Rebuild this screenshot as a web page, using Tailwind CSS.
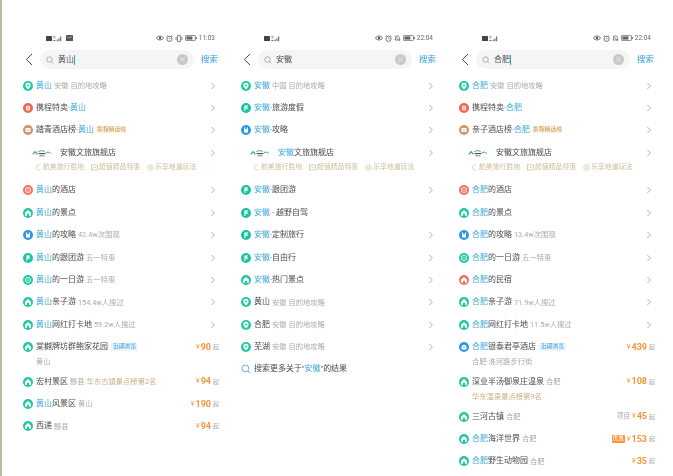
<!DOCTYPE html>
<html lang="en">

<head>
  <meta charset="UTF-8">
  <title>Search suggestions</title>
  <script src="https://cdn.jsdelivr.net/npm/@tailwindcss/browser@4"></script>
</head>

<body class="bg-white w-[673px] h-[476px] overflow-hidden font-['Roboto','Noto_Sans_CJK_SC',sans-serif] text-[8px] leading-none text-[#4a4a4a]">
  <!-- shared icons -->
  <svg class="hidden">
    <symbol id="pin" viewBox="0 0 10 10"><circle cx="5" cy="5" r="5" fill="#1fc9a3"/><path d="M5 1.8a2.6 2.6 0 0 1 2.6 2.6C7.6 6 5 8.4 5 8.4S2.4 6 2.4 4.4A2.6 2.6 0 0 1 5 1.8z" fill="#fff"/><circle cx="5" cy="4.4" r="1" fill="#1fc9a3"/></symbol>
    <symbol id="sale" viewBox="0 0 10 10"><circle cx="5" cy="5" r="5" fill="#f3674f"/><rect x="3" y="2.8" width="4" height="4.6" rx=".8" fill="#fff" opacity=".85"/><path d="M4.2 4.2h1.6M4.2 5.8h1.6" stroke="#f3674f" stroke-width=".6"/></symbol>
    <symbol id="rank" viewBox="0 0 10 10"><circle cx="5" cy="5" r="5" fill="#d0956a"/><rect x="2.4" y="3" width="5.2" height="4" rx="1" fill="#fff"/><path d="M3.4 5h3.2" stroke="#d0956a" stroke-width=".7"/></symbol>
    <symbol id="hotel" viewBox="0 0 10 10"><circle cx="5" cy="5" r="5" fill="#f46f60"/><rect x="2.6" y="2.8" width="4.8" height="4.4" rx="1" fill="none" stroke="#fff" stroke-width=".9"/><path d="M4 5h2" stroke="#fff" stroke-width=".8"/></symbol>
    <symbol id="scenic" viewBox="0 0 10 10"><circle cx="5" cy="5" r="5" fill="#21c8a0"/><path d="M5 2 8 4.7v3H6V5.8H4v1.9H2V4.7z" fill="#fff"/></symbol>
    <symbol id="inn" viewBox="0 0 10 10"><circle cx="5" cy="5" r="5" fill="#f46f60"/><path d="M5 2 8 4.7v3H6V5.8H4v1.9H2V4.7z" fill="#fff"/></symbol>
    <symbol id="guide" viewBox="0 0 10 10"><circle cx="5" cy="5" r="5" fill="#2d97e9"/><path d="M3 2.4h1.2v2l.9-.6.9.6v-2H7v5.2H3z" fill="#fff"/></symbol>
    <symbol id="flag" viewBox="0 0 10 10"><circle cx="5" cy="5" r="5" fill="#18c4a1"/><path d="M3.4 2.4h4L6 4.2l1.4 1.6h-3v2.2h-1z" fill="#fff"/></symbol>
    <symbol id="day" viewBox="0 0 10 10"><circle cx="5" cy="5" r="5" fill="#21c8a0"/><circle cx="5" cy="5" r="2.6" fill="none" stroke="#fff" stroke-width=".8"/><path d="M3.8 5h2.4" stroke="#fff" stroke-width=".7"/></symbol>
    <symbol id="stay" viewBox="0 0 10 10"><circle cx="5" cy="5" r="5" fill="#2d97e9"/><path d="M2.6 7.4V4L5 2.4 7.4 4v3.4z" fill="#fff"/><path d="M4 5h2" stroke="#2d97e9" stroke-width=".7"/></symbol>
    <symbol id="more" viewBox="0 0 8 8"><path d="M2.4 1 5.4 4 2.4 7" fill="none" stroke="#a8a8a8" stroke-width=".9"/></symbol>
    <symbol id="lens" viewBox="0 0 10 10"><circle cx="4.4" cy="4.4" r="3.4" fill="none" stroke="currentColor" stroke-width=".8"/><path d="m6.9 6.9 2.3 2.3" stroke="currentColor" stroke-width=".8"/></symbol>
    <symbol id="clear" viewBox="0 0 11 11"><circle cx="5.5" cy="5.5" r="5.5" fill="#c8c8c8"/><path d="m3.6 3.6 3.8 3.8m0-3.8L3.6 7.4" stroke="#f2f2f2" stroke-width=".9"/></symbol>
    <symbol id="back" viewBox="0 0 8 13"><path d="M7 1 1.4 6.5 7 12" fill="none" stroke="#444" stroke-width="1"/></symbol>
    <symbol id="logo" viewBox="0 0 20 8"><path d="M.8 5.4 3.2 2.6l2.2 2.8" fill="none" stroke="#35ad63" stroke-width="1.1"/><path d="M6.4 2.6c1.8-1.2 4.4-1.2 6.2 0" fill="none" stroke="#35ad63" stroke-width="1"/><path d="M14 3.6c1.6-.8 3-.6 4.8.8" fill="none" stroke="#35ad63" stroke-width="1"/><path d="M6.6 4.6h6.8" stroke="#444" stroke-width="1.1"/><path d="M7.6 6.8h2.2" stroke="#e0483e" stroke-width="1.1"/><path d="M10.2 6.8h2.2" stroke="#3a8fd8" stroke-width="1.1"/></symbol>
    <symbol id="eye" viewBox="0 0 8 6"><path d="M.4 3C2 .4 6 .4 7.6 3 6 5.6 2 5.6.4 3z" fill="none" stroke="#555" stroke-width=".8"/><circle cx="4" cy="3" r="1.2" fill="#555"/></symbol>
    <symbol id="alarm" viewBox="0 0 7 7"><circle cx="3.5" cy="3.8" r="2.6" fill="none" stroke="#555" stroke-width=".8"/><path d="M.6 1.4 1.8.4M6.4 1.4 5.2.4M3.5 2.6v1.3h1" fill="none" stroke="#555" stroke-width=".6"/></symbol>
    <symbol id="buzz" viewBox="0 0 8 7"><rect x="2.4" y=".6" width="3.2" height="5.8" rx=".5" fill="none" stroke="#555" stroke-width=".8"/><path d="M1 2v3M7 2v3" stroke="#555" stroke-width=".7"/></symbol>
    <symbol id="mute" viewBox="0 0 7 7"><path d="M3.5.8c-1.4 0-1.8 1-1.8 2.2L1 5h5l-.7-2C5.3 1.8 4.9.8 3.5.8z" fill="none" stroke="#555" stroke-width=".7"/><path d="m1 .8 5 5.6" stroke="#555" stroke-width=".6"/></symbol>
    <symbol id="batt" viewBox="0 0 12 6"><rect x=".4" y=".4" width="10" height="5.2" rx=".8" fill="none" stroke="#555" stroke-width=".7"/><rect x="1.4" y="1.4" width="6" height="3.2" fill="#666"/><rect x="10.8" y="2" width=".9" height="2" fill="#555"/></symbol>
    <symbol id="signal" viewBox="0 0 18 7"><rect x="0" y="1" width="6" height="5" rx=".5" fill="#444"/><path d="M7.4 1.4h2M7.4 3h2" stroke="#666" stroke-width=".7"/><rect x="7.4" y="5" width="2" height="1" fill="#666"/><rect x="10.6" y="4.6" width="1" height="1.6" fill="#555"/><rect x="12.4" y="3.4" width="1" height="2.8" fill="#555"/><rect x="14.2" y="1.4" width="1" height="4.8" fill="#555"/></symbol>
    <symbol id="mail" viewBox="0 0 7 6"><rect width="7" height="6" rx=".6" fill="#555"/><path d="m1 1.4 2.5 1.8L6 1.4" fill="none" stroke="#ddd" stroke-width=".6"/></symbol>
    <symbol id="tag1" viewBox="0 0 7 7"><path d="M5.6 1H2.4L1.4 3.5 2.4 6h3.2" fill="none" stroke="#d8ccb0" stroke-width=".7"/></symbol>
    <symbol id="tag2" viewBox="0 0 7 7"><rect x=".6" y="1" width="5.8" height="5" fill="none" stroke="#cdb98f" stroke-width=".7"/><path d="M2.4 3.5h2.2" stroke="#cdb98f" stroke-width=".7"/></symbol>
    <symbol id="tag3" viewBox="0 0 7 7"><circle cx="3.5" cy="3.5" r="3" fill="none" stroke="#d8ccb0" stroke-width=".7"/><circle cx="3.5" cy="3.5" r="1.2" fill="none" stroke="#cdb98f" stroke-width=".7"/></symbol>
  </svg>

  <div class="flex h-full blur-[0.3px]">
    <!-- Huangshan -->
    <div class="w-[218px] shrink-0 h-full border-l-[2px] border-[#b9b9a6]">
      <div class="flex items-center justify-between h-[14px] mt-[31px] pl-[44px] pr-[3px]">
        <div class="flex items-center gap-[2px]">
          <svg class="w-[18px] h-[7px]"><use href="#signal"/></svg>
          <svg class="w-[7px] h-[6px]"><use href="#mail"/></svg>
        </div>
        <div class="flex items-center gap-[2px] text-[6.5px] text-[#666]">
          <svg class="w-[8px] h-[6px]"><use href="#eye"/></svg>
          <svg class="w-[7px] h-[7px]"><use href="#alarm"/></svg>
          <svg class="w-[8px] h-[7px]"><use href="#buzz"/></svg>
          <svg class="w-[12px] h-[6px]"><use href="#batt"/></svg>
          <span>11:03</span>
        </div>
      </div>
      <div class="flex items-center h-[19px] mt-[5px] pl-[23px]">
        <svg class="w-[8px] h-[13px]"><use href="#back"/></svg>
        <div class="flex items-center w-[154px] h-[19px] ml-[7px] pl-[6px] pr-[6px] rounded-full bg-[#f5f5f5]">
          <svg class="w-[8px] h-[8px] text-[#888]"><use href="#lens"/></svg>
          <span class="ml-[4px]">黄山</span>
          <span class="w-px h-[10px] bg-[#3a9be0]"></span>
          <svg class="w-[11px] h-[11px] ml-auto"><use href="#clear"/></svg>
        </div>
        <span class="ml-[7px] text-[8.5px] text-[#3a9be0]">搜索</span>
      </div>
      <div class="mt-[5.4px] pl-[21px]">
        <div class="flex items-center h-[22.4px]"><svg class="w-[10px] h-[10px] mr-[3px]"><use href="#pin"/></svg><span class="text-[#3ba7d6]">黄山</span><span class="ml-[2px] text-[7.3px] text-[#aaa]">安徽 目的地攻略</span><svg class="w-[8px] h-[8px] ml-auto mr-[1px]"><use href="#more"/></svg></div>
        <div class="flex items-center h-[22.4px]"><svg class="w-[10px] h-[10px] mr-[3px]"><use href="#sale"/></svg><span>携程特卖·<span class="text-[#3ba7d6]">黄山</span></span><svg class="w-[8px] h-[8px] ml-auto mr-[1px]"><use href="#more"/></svg></div>
        <div class="flex items-center h-[22.4px]"><svg class="w-[10px] h-[10px] mr-[3px]"><use href="#rank"/></svg><span>踏青酒店榜·<span class="text-[#3ba7d6]">黄山</span></span><span class="ml-[3px] text-[5.8px] text-[#cf9a4e] bg-[#fdf5ea]">携程精选榜</span><svg class="w-[8px] h-[8px] ml-auto mr-[1px]"><use href="#more"/></svg></div>
        <div class="h-[37.6px]">
          <div class="flex items-center h-[22.4px]"><svg class="w-[20px] h-[8px] ml-[9px] mr-[8px]"><use href="#logo"/></svg><span>安徽文旅旗舰店</span><svg class="w-[8px] h-[8px] ml-auto mr-[1px]"><use href="#more"/></svg></div>
          <div class="flex items-center pl-[12px] text-[6.85px] text-[#cdbd9a]"><svg class="w-[7px] h-[7px] mr-[1px]"><use href="#tag1"/></svg><span>航美旅行胜地</span><svg class="w-[7px] h-[7px] ml-[7px] mr-[1px]"><use href="#tag2"/></svg><span>超值精品特惠</span><svg class="w-[7px] h-[7px] ml-[7px] mr-[1px]"><use href="#tag3"/></svg><span>乐享地道玩法</span></div>
        </div>
        <div class="flex items-center h-[22.4px]"><svg class="w-[10px] h-[10px] mr-[3px]"><use href="#hotel"/></svg><span><span class="text-[#3ba7d6]">黄山</span>的酒店</span><svg class="w-[8px] h-[8px] ml-auto mr-[1px]"><use href="#more"/></svg></div>
        <div class="flex items-center h-[22.4px]"><svg class="w-[10px] h-[10px] mr-[3px]"><use href="#scenic"/></svg><span><span class="text-[#3ba7d6]">黄山</span>的景点</span><svg class="w-[8px] h-[8px] ml-auto mr-[1px]"><use href="#more"/></svg></div>
        <div class="flex items-center h-[22.4px]"><svg class="w-[10px] h-[10px] mr-[3px]"><use href="#guide"/></svg><span><span class="text-[#3ba7d6]">黄山</span>的攻略</span><span class="ml-[2px] text-[7.3px] text-[#aaa]">42.4w次围观</span><svg class="w-[8px] h-[8px] ml-auto mr-[1px]"><use href="#more"/></svg></div>
        <div class="flex items-center h-[22.4px]"><svg class="w-[10px] h-[10px] mr-[3px]"><use href="#flag"/></svg><span><span class="text-[#3ba7d6]">黄山</span>的跟团游</span><span class="ml-[2px] text-[7.3px] text-[#aaa]">五一特惠</span><svg class="w-[8px] h-[8px] ml-auto mr-[1px]"><use href="#more"/></svg></div>
        <div class="flex items-center h-[22.4px]"><svg class="w-[10px] h-[10px] mr-[3px]"><use href="#day"/></svg><span><span class="text-[#3ba7d6]">黄山</span>的一日游</span><span class="ml-[2px] text-[7.3px] text-[#aaa]">五一特惠</span><svg class="w-[8px] h-[8px] ml-auto mr-[1px]"><use href="#more"/></svg></div>
        <div class="flex items-center h-[22.4px]"><svg class="w-[10px] h-[10px] mr-[3px]"><use href="#scenic"/></svg><span><span class="text-[#3ba7d6]">黄山</span>亲子游</span><span class="ml-[2px] text-[7.3px] text-[#aaa]">154.4w人搜过</span><svg class="w-[8px] h-[8px] ml-auto mr-[1px]"><use href="#more"/></svg></div>
        <div class="flex items-center h-[22.4px]"><svg class="w-[10px] h-[10px] mr-[3px]"><use href="#scenic"/></svg><span><span class="text-[#3ba7d6]">黄山</span>网红打卡地</span><span class="ml-[2px] text-[7.3px] text-[#aaa]">59.2w人搜过</span><svg class="w-[8px] h-[8px] ml-auto mr-[1px]"><use href="#more"/></svg></div>
        <div class="h-[34.6px]">
          <div class="flex items-center h-[22.4px]"><svg class="w-[10px] h-[10px] mr-[3px]"><use href="#scenic"/></svg><span>棠樾牌坊群鲍家花园</span><span class="ml-[3px] px-[2px] py-[1px] text-[5.8px] text-[#3a9be0] bg-[#eaf5fd]">近期浏览</span><span class="ml-auto text-[7px] text-[#f5a04a]">¥</span><span class="ml-[1px] text-[9px] font-bold text-[#f5973a]">90</span><span class="ml-[2px] -mr-px text-[6px] text-[#aaa]">起</span></div>
          <div class="pl-[13px] text-[7.3px] text-[#aaa]">黄山</div>
        </div>
        <div class="flex items-center h-[22.4px]"><svg class="w-[10px] h-[10px] mr-[3px]"><use href="#scenic"/></svg><span>宏村景区</span><span class="ml-[2px] text-[7.3px] text-[#aaa]">黟县</span><span class="ml-[2px] text-[7.3px] text-[#cdae84]">华东古镇景点榜第2名</span><span class="ml-auto text-[7px] text-[#f5a04a]">¥</span><span class="ml-[1px] text-[9px] font-bold text-[#f5973a]">94</span><span class="ml-[2px] -mr-px text-[6px] text-[#aaa]">起</span></div>
        <div class="flex items-center h-[22.4px]"><svg class="w-[10px] h-[10px] mr-[3px]"><use href="#scenic"/></svg><span><span class="text-[#3ba7d6]">黄山</span>风景区</span><span class="ml-[2px] text-[7.3px] text-[#aaa]">黄山</span><span class="ml-auto text-[7px] text-[#f5a04a]">¥</span><span class="ml-[1px] text-[9px] font-bold text-[#f5973a]">190</span><span class="ml-[2px] -mr-px text-[6px] text-[#aaa]">起</span></div>
        <div class="flex items-center h-[22.4px]"><svg class="w-[10px] h-[10px] mr-[3px]"><use href="#scenic"/></svg><span>西递</span><span class="ml-[2px] text-[7.3px] text-[#aaa]">黟县</span><span class="ml-auto text-[7px] text-[#f5a04a]">¥</span><span class="ml-[1px] text-[9px] font-bold text-[#f5973a]">94</span><span class="ml-[2px] -mr-px text-[6px] text-[#aaa]">起</span></div>
      </div>
    </div>

    <!-- Anhui -->
    <div class="w-[218px] shrink-0 h-full border-l-[2px] border-transparent">
      <div class="flex items-center justify-between h-[14px] mt-[31px] pl-[44px] pr-[3px]">
        <svg class="w-[18px] h-[7px]"><use href="#signal"/></svg>
        <div class="flex items-center gap-[2px] text-[6.5px] text-[#666]">
          <svg class="w-[8px] h-[6px]"><use href="#eye"/></svg>
          <svg class="w-[7px] h-[7px]"><use href="#alarm"/></svg>
          <svg class="w-[7px] h-[7px]"><use href="#mute"/></svg>
          <svg class="w-[12px] h-[6px]"><use href="#batt"/></svg>
          <span>22:04</span>
        </div>
      </div>
      <div class="flex items-center h-[19px] mt-[5px] pl-[23px]">
        <svg class="w-[8px] h-[13px]"><use href="#back"/></svg>
        <div class="flex items-center w-[154px] h-[19px] ml-[7px] pl-[6px] pr-[6px] rounded-full bg-[#f5f5f5]">
          <svg class="w-[8px] h-[8px] text-[#888]"><use href="#lens"/></svg>
          <span class="ml-[4px]">安徽</span>
          <svg class="w-[11px] h-[11px] ml-auto"><use href="#clear"/></svg>
        </div>
        <span class="ml-[7px] text-[8.5px] text-[#3a9be0]">搜索</span>
      </div>
      <div class="mt-[5.4px] pl-[21px]">
        <div class="flex items-center h-[22.4px]"><svg class="w-[10px] h-[10px] mr-[3px]"><use href="#pin"/></svg><span class="text-[#3ba7d6]">安徽</span><span class="ml-[2px] text-[7.3px] text-[#aaa]">中国 目的地攻略</span><svg class="w-[8px] h-[8px] ml-auto mr-[1px]"><use href="#more"/></svg></div>
        <div class="flex items-center h-[22.4px]"><svg class="w-[10px] h-[10px] mr-[3px]"><use href="#flag"/></svg><span><span class="text-[#3ba7d6]">安徽</span>·旅游度假</span><svg class="w-[8px] h-[8px] ml-auto mr-[1px]"><use href="#more"/></svg></div>
        <div class="flex items-center h-[22.4px]"><svg class="w-[10px] h-[10px] mr-[3px]"><use href="#guide"/></svg><span><span class="text-[#3ba7d6]">安徽</span>·攻略</span><svg class="w-[8px] h-[8px] ml-auto mr-[1px]"><use href="#more"/></svg></div>
        <div class="h-[37.6px]">
          <div class="flex items-center h-[22.4px]"><svg class="w-[20px] h-[8px] ml-[9px] mr-[8px]"><use href="#logo"/></svg><span><span class="text-[#3ba7d6]">安徽</span>文旅旗舰店</span><svg class="w-[8px] h-[8px] ml-auto mr-[1px]"><use href="#more"/></svg></div>
          <div class="flex items-center pl-[12px] text-[6.85px] text-[#cdbd9a]"><svg class="w-[7px] h-[7px] mr-[1px]"><use href="#tag1"/></svg><span>航美旅行胜地</span><svg class="w-[7px] h-[7px] ml-[7px] mr-[1px]"><use href="#tag2"/></svg><span>超值精品特惠</span><svg class="w-[7px] h-[7px] ml-[7px] mr-[1px]"><use href="#tag3"/></svg><span>乐享地道玩法</span></div>
        </div>
        <div class="flex items-center h-[22.4px]"><svg class="w-[10px] h-[10px] mr-[3px]"><use href="#flag"/></svg><span><span class="text-[#3ba7d6]">安徽</span>·跟团游</span><svg class="w-[8px] h-[8px] ml-auto mr-[1px]"><use href="#more"/></svg></div>
        <div class="flex items-center h-[22.4px]"><svg class="w-[10px] h-[10px] mr-[3px]"><use href="#flag"/></svg><span><span class="text-[#3ba7d6]">安徽</span> · 越野自驾</span></div>
        <div class="flex items-center h-[22.4px]"><svg class="w-[10px] h-[10px] mr-[3px]"><use href="#flag"/></svg><span><span class="text-[#3ba7d6]">安徽</span>·定制旅行</span><svg class="w-[8px] h-[8px] ml-auto mr-[1px]"><use href="#more"/></svg></div>
        <div class="flex items-center h-[22.4px]"><svg class="w-[10px] h-[10px] mr-[3px]"><use href="#flag"/></svg><span><span class="text-[#3ba7d6]">安徽</span>·自由行</span><svg class="w-[8px] h-[8px] ml-auto mr-[1px]"><use href="#more"/></svg></div>
        <div class="flex items-center h-[22.4px]"><svg class="w-[10px] h-[10px] mr-[3px]"><use href="#scenic"/></svg><span><span class="text-[#3ba7d6]">安徽</span>·热门景点</span><svg class="w-[8px] h-[8px] ml-auto mr-[1px]"><use href="#more"/></svg></div>
        <div class="flex items-center h-[22.4px]"><svg class="w-[10px] h-[10px] mr-[3px]"><use href="#pin"/></svg><span>黄山</span><span class="ml-[2px] text-[7.3px] text-[#aaa]">安徽 目的地攻略</span><svg class="w-[8px] h-[8px] ml-auto mr-[1px]"><use href="#more"/></svg></div>
        <div class="flex items-center h-[22.4px]"><svg class="w-[10px] h-[10px] mr-[3px]"><use href="#pin"/></svg><span>合肥</span><span class="ml-[2px] text-[7.3px] text-[#aaa]">安徽 目的地攻略</span><svg class="w-[8px] h-[8px] ml-auto mr-[1px]"><use href="#more"/></svg></div>
        <div class="flex items-center h-[22.4px]"><svg class="w-[10px] h-[10px] mr-[3px]"><use href="#pin"/></svg><span>芜湖</span><span class="ml-[2px] text-[7.3px] text-[#aaa]">安徽 目的地攻略</span><svg class="w-[8px] h-[8px] ml-auto mr-[1px]"><use href="#more"/></svg></div>
        <div class="flex items-center h-[22.4px]"><svg class="w-[10px] h-[10px] mr-[3px] text-[#3a9be0]"><use href="#lens"/></svg><span>搜索更多关于"<span class="text-[#3ba7d6]">安徽</span>"的结果</span></div>
      </div>
    </div>

    <!-- Hefei -->
    <div class="w-[218px] shrink-0 h-full border-l-[2px] border-transparent">
      <div class="flex items-center justify-between h-[14px] mt-[31px] pl-[44px] pr-[3px]">
        <svg class="w-[18px] h-[7px]"><use href="#signal"/></svg>
        <div class="flex items-center gap-[2px] text-[6.5px] text-[#666]">
          <svg class="w-[8px] h-[6px]"><use href="#eye"/></svg>
          <svg class="w-[7px] h-[7px]"><use href="#alarm"/></svg>
          <svg class="w-[7px] h-[7px]"><use href="#mute"/></svg>
          <svg class="w-[12px] h-[6px]"><use href="#batt"/></svg>
          <span>22:04</span>
        </div>
      </div>
      <div class="flex items-center h-[19px] mt-[5px] pl-[23px]">
        <svg class="w-[8px] h-[13px]"><use href="#back"/></svg>
        <div class="flex items-center w-[154px] h-[19px] ml-[7px] pl-[6px] pr-[6px] rounded-full bg-[#f5f5f5]">
          <svg class="w-[8px] h-[8px] text-[#888]"><use href="#lens"/></svg>
          <span class="ml-[4px]">合肥</span>
          <span class="w-px h-[10px] bg-[#3a9be0]"></span>
          <svg class="w-[11px] h-[11px] ml-auto"><use href="#clear"/></svg>
        </div>
        <span class="ml-[7px] text-[8.5px] text-[#3a9be0]">搜索</span>
      </div>
      <div class="mt-[5.4px] pl-[21px]">
        <div class="flex items-center h-[22.4px]"><svg class="w-[10px] h-[10px] mr-[3px]"><use href="#pin"/></svg><span class="text-[#3ba7d6]">合肥</span><span class="ml-[2px] text-[7.3px] text-[#aaa]">安徽 目的地攻略</span><svg class="w-[8px] h-[8px] ml-auto mr-[1px]"><use href="#more"/></svg></div>
        <div class="flex items-center h-[22.4px]"><svg class="w-[10px] h-[10px] mr-[3px]"><use href="#sale"/></svg><span>携程特卖·<span class="text-[#3ba7d6]">合肥</span></span><svg class="w-[8px] h-[8px] ml-auto mr-[1px]"><use href="#more"/></svg></div>
        <div class="flex items-center h-[22.4px]"><svg class="w-[10px] h-[10px] mr-[3px]"><use href="#rank"/></svg><span>亲子酒店榜·<span class="text-[#3ba7d6]">合肥</span></span><span class="ml-[3px] text-[5.8px] text-[#cf9a4e] bg-[#fdf5ea]">携程精选榜</span><svg class="w-[8px] h-[8px] ml-auto mr-[1px]"><use href="#more"/></svg></div>
        <div class="h-[37.6px]">
          <div class="flex items-center h-[22.4px]"><svg class="w-[20px] h-[8px] ml-[9px] mr-[8px]"><use href="#logo"/></svg><span>安徽文旅旗舰店</span><svg class="w-[8px] h-[8px] ml-auto mr-[1px]"><use href="#more"/></svg></div>
          <div class="flex items-center pl-[12px] text-[6.85px] text-[#cdbd9a]"><svg class="w-[7px] h-[7px] mr-[1px]"><use href="#tag1"/></svg><span>航美旅行胜地</span><svg class="w-[7px] h-[7px] ml-[7px] mr-[1px]"><use href="#tag2"/></svg><span>超值精品特惠</span><svg class="w-[7px] h-[7px] ml-[7px] mr-[1px]"><use href="#tag3"/></svg><span>乐享地道玩法</span></div>
        </div>
        <div class="flex items-center h-[22.4px]"><svg class="w-[10px] h-[10px] mr-[3px]"><use href="#hotel"/></svg><span><span class="text-[#3ba7d6]">合肥</span>的酒店</span><svg class="w-[8px] h-[8px] ml-auto mr-[1px]"><use href="#more"/></svg></div>
        <div class="flex items-center h-[22.4px]"><svg class="w-[10px] h-[10px] mr-[3px]"><use href="#scenic"/></svg><span><span class="text-[#3ba7d6]">合肥</span>的景点</span><svg class="w-[8px] h-[8px] ml-auto mr-[1px]"><use href="#more"/></svg></div>
        <div class="flex items-center h-[22.4px]"><svg class="w-[10px] h-[10px] mr-[3px]"><use href="#guide"/></svg><span><span class="text-[#3ba7d6]">合肥</span>的攻略</span><span class="ml-[2px] text-[7.3px] text-[#aaa]">13.4w次围观</span><svg class="w-[8px] h-[8px] ml-auto mr-[1px]"><use href="#more"/></svg></div>
        <div class="flex items-center h-[22.4px]"><svg class="w-[10px] h-[10px] mr-[3px]"><use href="#day"/></svg><span><span class="text-[#3ba7d6]">合肥</span>的一日游</span><span class="ml-[2px] text-[7.3px] text-[#aaa]">五一特惠</span><svg class="w-[8px] h-[8px] ml-auto mr-[1px]"><use href="#more"/></svg></div>
        <div class="flex items-center h-[22.4px]"><svg class="w-[10px] h-[10px] mr-[3px]"><use href="#inn"/></svg><span><span class="text-[#3ba7d6]">合肥</span>的民宿</span><svg class="w-[8px] h-[8px] ml-auto mr-[1px]"><use href="#more"/></svg></div>
        <div class="flex items-center h-[22.4px]"><svg class="w-[10px] h-[10px] mr-[3px]"><use href="#scenic"/></svg><span><span class="text-[#3ba7d6]">合肥</span>亲子游</span><span class="ml-[2px] text-[7.3px] text-[#aaa]">71.9w人搜过</span><svg class="w-[8px] h-[8px] ml-auto mr-[1px]"><use href="#more"/></svg></div>
        <div class="flex items-center h-[22.4px]"><svg class="w-[10px] h-[10px] mr-[3px]"><use href="#scenic"/></svg><span><span class="text-[#3ba7d6]">合肥</span>网红打卡地</span><span class="ml-[2px] text-[7.3px] text-[#aaa]">11.5w人搜过</span><svg class="w-[8px] h-[8px] ml-auto mr-[1px]"><use href="#more"/></svg></div>
        <div class="h-[34.6px]">
          <div class="flex items-center h-[22.4px]"><svg class="w-[10px] h-[10px] mr-[3px]"><use href="#stay"/></svg><span><span class="text-[#3ba7d6]">合肥</span>银泰君亭酒店</span><span class="ml-[3px] px-[2px] py-[1px] text-[5.8px] text-[#3a9be0] bg-[#eaf5fd]">近期浏览</span><span class="ml-auto text-[7px] text-[#f5a04a]">¥</span><span class="ml-[1px] text-[9px] font-bold text-[#f5973a]">439</span><span class="ml-[2px] -mr-px text-[6px] text-[#aaa]">起</span></div>
          <div class="pl-[13px] text-[7.3px] text-[#aaa]">合肥·淮河路步行街</div>
        </div>
        <div class="h-[35px]">
          <div class="flex items-center h-[22.4px]"><svg class="w-[10px] h-[10px] mr-[3px]"><use href="#scenic"/></svg><span>深业半汤御泉庄温泉</span><span class="ml-[2px] text-[7.3px] text-[#aaa]">合肥</span><span class="ml-auto text-[7px] text-[#f5a04a]">¥</span><span class="ml-[1px] text-[9px] font-bold text-[#f5973a]">108</span><span class="ml-[2px] -mr-px text-[6px] text-[#aaa]">起</span></div>
          <div class="pl-[13px] text-[7.3px] text-[#cdae84]">华东温泉景点榜第9名</div>
        </div>
        <div class="flex items-center h-[22.4px]"><svg class="w-[10px] h-[10px] mr-[3px]"><use href="#scenic"/></svg><span>三河古镇</span><span class="ml-[2px] text-[7.3px] text-[#aaa]">合肥</span><span class="ml-auto mr-[2px] text-[6.5px] text-[#aaa]">项目</span><span class="text-[7px] text-[#f5a04a]">¥</span><span class="ml-[1px] text-[9px] font-bold text-[#f5973a]">45</span><span class="ml-[2px] -mr-px text-[6px] text-[#aaa]">起</span></div>
        <div class="flex items-center h-[22.4px]"><svg class="w-[10px] h-[10px] mr-[3px]"><use href="#scenic"/></svg><span><span class="text-[#3ba7d6]">合肥</span>海洋世界</span><span class="ml-[2px] text-[7.3px] text-[#aaa]">合肥</span><span class="ml-auto mr-[2px] px-[1px] py-[1px] text-[5.5px] text-[#fff] bg-[#f5973a] rounded-[1px]">优惠</span><span class="text-[7px] text-[#f5a04a]">¥</span><span class="ml-[1px] text-[9px] font-bold text-[#f5973a]">153</span><span class="ml-[2px] -mr-px text-[6px] text-[#aaa]">起</span></div>
        <div class="flex items-center h-[22.4px]"><svg class="w-[10px] h-[10px] mr-[3px]"><use href="#scenic"/></svg><span><span class="text-[#3ba7d6]">合肥</span>野生动物园</span><span class="ml-[2px] text-[7.3px] text-[#aaa]">合肥</span><span class="ml-auto text-[7px] text-[#f5a04a]">¥</span><span class="ml-[1px] text-[9px] font-bold text-[#f5973a]">35</span><span class="ml-[2px] -mr-px text-[6px] text-[#aaa]">起</span></div>
      </div>
    </div>
  </div>
</body>

</html>
